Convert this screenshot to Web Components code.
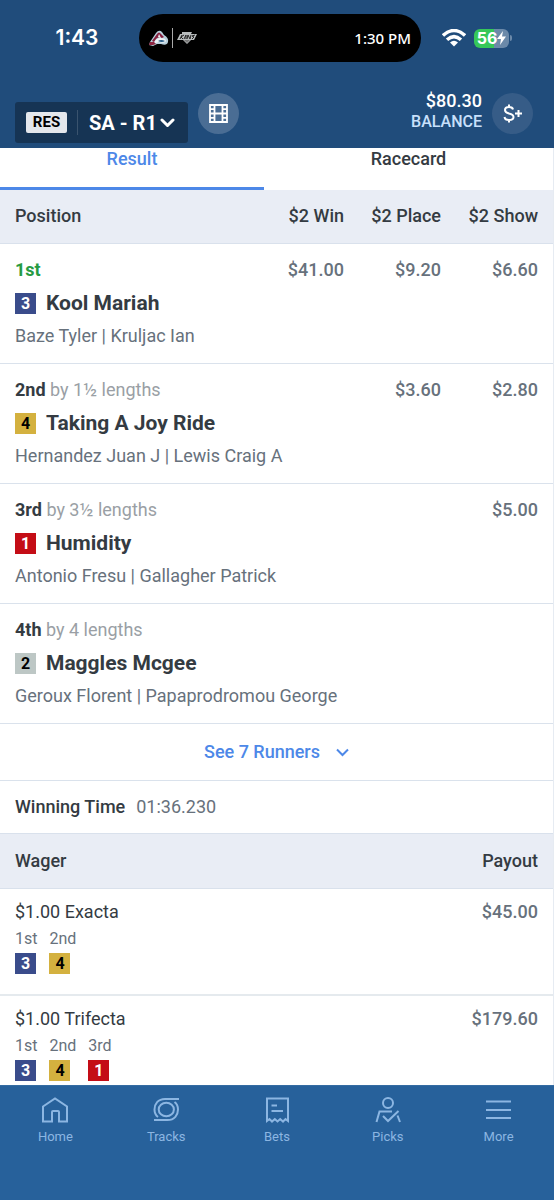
<!DOCTYPE html>
<html lang="en">
<head>
<meta charset="utf-8">
<meta name="viewport" content="width=device-width, initial-scale=1">
<title>SA - R1 Results</title>
<style>
  html, body { margin: 0; height: 100%; }
  body { font-family: Roboto, "Liberation Sans", sans-serif; font-size: 18px; line-height: 24px; color: #343b42; background: #fff; }
</style>
</head>
<body>
<race-app></race-app>
<script>
const define = (name, html) => customElements.define(name, class extends HTMLElement {
  connectedCallback() {
    if (this.shadowRoot) return;
    const root = this.attachShadow({ mode: "open" });
    root.innerHTML = typeof html === "function" ? html(this) : html;
  }
});

/* Numbered saddle cloth */
define("saddle-cloth", `
<style>
  :host { display: inline-grid; place-items: center; width: 21px; height: 21px; box-sizing: border-box;
    font-size: 16px; line-height: 21px; font-weight: 700; color: #000; background: #d4b13f; }
  :host([number="1"]) { background: #c40d16; color: #fff; }
  :host([number="2"]) { background: #bdc7c5; }
  :host([number="3"]) { background: #3a4c8b; color: #fff; }
</style><slot></slot>`);

define("status-bar", `
<style>
  :host { display: grid; grid-template-columns: 139fr 282px 133fr; align-items: center; padding-top: 14px; color: #fff;
    font-family: Inter, "Liberation Sans", sans-serif; }
  .clock { text-align: center; font-size: 21px; font-weight: 600; padding-left: 15px; }
  .island { display: flex; align-items: center; height: 48px; border-radius: 24px; background: #000;
    padding: 0 10px 0 9px; box-sizing: border-box; }
  .island svg { display: block; }
  .sep { width: 1px; height: 20px; background: #a9a9a9; margin: 0 4px 0 2px; }
  .game { margin-left: auto; font: 500 15px/24px "Noto Sans", sans-serif; }
  .right { display: flex; align-items: center; gap: 8px; padding-left: 21px; }
  .battery { display: flex; align-items: center; gap: 1px; }
  .cell { display: flex; align-items: center; justify-content: center; width: 35px; height: 19px; border-radius: 6px;
    background: linear-gradient(90deg, #36c759 56%, #6b89a9 56%); font-size: 16px; line-height: 19px; font-weight: 700; }
  .tip { width: 2px; height: 6px; border-radius: 0 2px 2px 0; background: #6b89a9; }
</style>
<span class="clock">1:43</span>
<div class="island">
  <svg width="22" height="20" viewBox="0 0 22 20" aria-label="Avalanche">
    <path d="M1 17 L2 14 L8 5 Q11 1 14 4 L16 7 Q21 10 20 14 Q19 18 13 16 L9 16 L5 18Z" fill="#b9d0dc"/>
    <path d="M4 13 L9 6 Q11 3 13 6 L16 9 L14 10 Q11 8 8 11 L6 14Z" fill="#86203f"/>
    <path d="M11 6 L13 10 L10 9Z" fill="#e9f0f4"/>
    <path d="M6 15 Q8 10 12 10 Q18 10 18 13 Q17 16 11 14 L8 15Z" fill="#eef3f6"/>
    <path d="M10 13 Q13 11 17 13 Q14 15 10 13Z" fill="#265d88"/><path d="M1 17 L2 14 L6 14 L8 16 L5 17Z" fill="#8e2541"/>
  </svg>
  <span class="sep"></span>
  <svg width="20" height="14" viewBox="0 0 20 14" aria-label="Kings">
    <path d="M5 1 H15 L14 3 H20 L17 9 H14 L10 13 L6 9 H0 L3 3 H5Z" fill="#b9bcbd"/>
    <path d="M3 8 L5 4 M4 6 L7 4 M4 6 L6 8 M7 8 L9 4 L9 8 M10 8 L11 4 L13 8 L14 4 M18 4 L15 5 L17 6 L15 8" stroke="#222" fill="none"/>
    <path d="M7 9 H13 L10 12Z" fill="#777"/>
  </svg>
  <span class="game">1:30 PM</span>
</div>
<div class="right">
  <svg width="24" height="18" viewBox="0 0 24 18" fill="none" stroke="#fff" stroke-width="3.4" aria-label="Wi-Fi">
    <path d="M1 6.500 Q12 -3.500 23 6.500"/><path d="M5 10.800 Q12 4.400 19 10.800"/><path d="M12 17.500 L8 13.500 Q12 10 16 13.500Z" fill="#fff" stroke="none"/>
  </svg>
  <div class="battery"><div class="cell"><span>56</span>
    <svg width="9" height="14" viewBox="0 0 9 14"><path d="M6 0 L0 8 H4 L3 14 L9 5.500 H5Z" fill="#fff"/></svg></div><span class="tip"></span></div>
</div>`);

define("race-header", `
<style>
  :host { display: flex; align-items: flex-start; padding: 31px 21px 5px 15px; color: #fff; }
  button { font: inherit; color: inherit; border: 0; padding: 0; cursor: pointer; }
  .race { display: flex; align-items: center; height: 41px; margin-top: 9px; padding: 0 13px 0 11px; border-radius: 3px; background: #163454; }
  .res { background: #e4e7ec; color: #000; border-radius: 2px; width: 41px; line-height: 21px; font-size: 15px; font-weight: 700; }
  .bar { width: 1px; height: 25px; margin: 0 11px 0 10px; background: #3a536e; }
  .name { font-size: 20px; font-weight: 700; margin-right: 3px; }
  .round { display: grid; place-items: center; width: 41px; height: 41px; border-radius: 50%; background: #4a6d94; }
  .film { margin: 0 auto 0 10px; }
  .balance { display: grid; gap: 2px; text-align: right; margin-right: 10px; font-weight: 500; line-height: 16px; }
  .balance small { font-size: 16px; line-height: 22px; color: #c8e0fb; }
  .add { background: #365c87; }
</style>
<button class="race"><span class="res">RES</span><span class="bar"></span><span class="name">SA - R1</span>
  <svg width="15" height="10" viewBox="0 0 15 10" fill="none" stroke="#fff" stroke-width="3" stroke-linecap="round" stroke-linejoin="round"><path d="M2 2 L7.500 7.500 L13 2"/></svg></button>
<button class="round film" aria-label="Replay">
  <svg width="19" height="19" viewBox="0 0 19 19" fill="none" stroke="#fff" stroke-width="1.8"><path d="M1 1 H18 V18 H1Z M5.500 1 V18 M13.500 1 V18 M5.500 9.500 H13.500"/><path d="M1 5.200 H5 M1 9.500 H5 M1 13.800 H5 M14 5.200 H18 M14 9.500 H18 M14 13.800 H18"/></svg></button>
<div class="balance">$80.30<small>BALANCE</small></div>
<button class="round add" aria-label="Deposit">
  <svg width="20" height="19" viewBox="0 0 20 19" fill="none" stroke="#fff" stroke-width="2"><path d="M10 5.500 Q9.500 3 6 3 Q2 3 2 6 Q2 8.500 6 9.500 Q10.500 10.500 10.500 13 Q10.500 16 6 16 Q2 16 1.500 13 M6 0.500 V3 M6 16 V18.500 M12 9.500 H19 M15.500 6 V13"/></svg></button>`);

define("view-tabs", `
<style>
  :host { display: grid; grid-template-columns: 264fr 289fr; }
  a { color: inherit; text-decoration: none; text-align: center; font-weight: 500; height: 39px; line-height: 22px; border-bottom: 3px solid transparent; }
  a[aria-current] { color: #4d88e8; border-color: #4d88e8; }
</style>
<a href="#result" aria-current="page">Result</a><a href="#racecard">Racecard</a>`);

const runners = [
  { place: "1st", n: 3, horse: "Kool Mariah", team: "Baze Tyler | Kruljac Ian", pay: ["$41.00", "$9.20", "$6.60"] },
  { place: "2nd", by: "by 1½ lengths", n: 4, horse: "Taking A Joy Ride", team: "Hernandez Juan J | Lewis Craig A", pay: ["", "$3.60", "$2.80"] },
  { place: "3rd", by: "by 3½ lengths", n: 1, horse: "Humidity", team: "Antonio Fresu | Gallagher Patrick", pay: ["", "", "$5.00"] },
  { place: "4th", by: "by 4 lengths", n: 2, horse: "Maggles Mcgee", team: "Geroux Florent | Papaprodromou George", pay: ["", "", ""] }
];
const tableStyle = `
  :host { display: block; }
  table { width: 100%; border-collapse: separate; border-spacing: 0; table-layout: fixed; }
  th, td { padding: 0; text-align: right; font-weight: 500; vertical-align: top; }
  th:first-child, td:first-child { text-align: left; padding-left: 15px; }
  th:last-child, td:last-child { padding-right: 15px; }
  thead th { background: #e9edf5; border-bottom: 1px solid #d9e1ec; padding-top: 14px; padding-bottom: 15px; }
  td { color: #67717c; }`;

define("results-table", () => `
<style>${tableStyle}
  .pay { width: 97px; } .last { width: 112px; }
  .top td { padding-top: 14px; }
  .detail td { padding-bottom: 15px; border-bottom: 1px solid #dae2ec; }
  b { font-weight: 700; color: #343b42; } .win b { color: #279b42; }
  .by { font-weight: 400; color: #9a9fa5; }
  .horse { display: flex; align-items: center; gap: 10px; margin: 9px 0; font-size: 21px; font-weight: 700; color: #343b42; }
  .team { font-weight: 400; }
</style>
<table>
  <colgroup><col><col class="pay"><col class="pay"><col class="last"></colgroup>
  <thead><tr><th scope="col">Position</th><th scope="col">$2 Win</th><th scope="col">$2 Place</th><th scope="col">$2 Show</th></tr></thead>
  ${runners.map((r, i) => `<tbody>
    <tr class="top ${i ? "" : "win"}"><td><b>${r.place}</b>${r.by ? ` <span class="by">${r.by}</span>` : ""}</td>${r.pay.map(p => `<td>${p}</td>`).join("")}</tr>
    <tr class="detail"><td colspan="4"><div class="horse"><saddle-cloth number="${r.n}">${r.n}</saddle-cloth>${r.horse}</div><div class="team">${r.team}</div></td></tr>
  </tbody>`).join("")}
</table>`);

define("race-summary", `
<style>
  :host { display: block; }
  button { display: flex; align-items: center; justify-content: center; gap: 16px; width: 100%; height: 57px; padding: 0; border: 0;
    border-bottom: 1px solid #dae2ec; background: none; font: inherit; font-weight: 500; color: #4d88e8; cursor: pointer; }
  p { display: flex; gap: 11px; margin: 0; padding: 14px 15px; color: #67717c; border-bottom: 1px solid #d9e1ec; }
  b { font-weight: 500; color: #343b42; }
</style>
<button>See 7 Runners<svg width="13" height="9" viewBox="0 0 13 9" fill="none" stroke="currentColor" stroke-width="2"><path d="M1 1.500 L6.500 7 L12 1.500"/></svg></button>
<p><b>Winning Time</b><span>01:36.230</span></p>`);

const wagers = [
  { name: "$1.00 Exacta", pay: "$45.00", legs: [["1st", 3], ["2nd", 4]] },
  { name: "$1.00 Trifecta", pay: "$179.60", legs: [["1st", 3], ["2nd", 4], ["3rd", 1]] }
];
define("wager-table", () => `
<style>${tableStyle}
  .pay { width: 160px; }
  thead th { padding-top: 15px; }
  tbody td { padding-top: 11px; padding-bottom: 20px; border-bottom: 2px solid #e5eaee; }
  .name { font-weight: 400; color: #343b42; }
  .legs { display: flex; gap: 12px; margin-top: 5px; font-size: 16px; line-height: 20px; font-weight: 400; }
  .legs span { display: grid; justify-items: start; gap: 4px; }
</style>
<table>
  <colgroup><col><col class="pay"></colgroup>
  <thead><tr><th scope="col">Wager</th><th scope="col">Payout</th></tr></thead>
  <tbody>${wagers.map(w => `<tr><td><div class="name">${w.name}</div><div class="legs">${w.legs.map(([p, n]) => `<span>${p}<saddle-cloth number="${n}">${n}</saddle-cloth></span>`).join("")}</div></td><td>${w.pay}</td></tr>`).join("")}</tbody>
</table>`);

const icons = {
  Home: `<path d="M2 10.500 L14 2.500 L26 10.500 V25.500 H18 V16 Q18 15 17 15 H12 Q11 15 11 16 V25.500 H2Z"/>`,
  Tracks: `<path d="M27 3 H13 C6 3 2.500 8 2.500 13.500 C2.500 17 4 19.500 6 21 M2 24 H15.500 C22.500 24 26 19 26 13.500 C26 10 24.500 7.500 22.500 6"/><ellipse cx="14.300" cy="13.500" rx="7.600" ry="6.800"/>`,
  Bets: `<path d="M4 25 V2.500 H25 V25 L22.500 23 L20 25.500 L17.200 23 L14.500 25.500 L11.800 23 L9 25.500 L6.500 23Z M8.500 9.500 H14 M8.500 15 H20"/>`,
  Picks: `<circle cx="14" cy="7" r="5"/><path d="M2.500 26 L5.500 15.500 H18 M9 20 L14 25 L24.500 15 M23.500 19.500 L26 26"/>`,
  More: `<path d="M1 5.500 H26 M1 14 H26 M1 22 H26"/>`
};
define("bottom-nav", () => `
<style>
  :host { display: block; background: #27619b; border-top: 1px solid #356ca2; box-sizing: border-box; }
  nav { display: grid; grid-template-columns: repeat(5, 1fr); padding: 10px 0 53px; }
  a { display: grid; justify-items: center; gap: 3px; color: #8cb6e2; text-decoration: none; font-size: 13px; line-height: 20px; }
  svg { display: block; }
</style>
<nav>${Object.entries(icons).map(([n, d]) => `<a href="#${n.toLowerCase()}"><svg width="28" height="28" viewBox="0 0 28 28" fill="none" stroke="currentColor" stroke-width="2">${d}</svg>${n}</a>`).join("")}</nav>`);

define("race-app", `
<style>
  :host { display: flex; flex-direction: column; height: 100vh; }
  header { background: #204c7b; flex: none; }
  main { flex: 1; min-height: 0; overflow: hidden; border-right: 1px solid #e6ebf2; }
  bottom-nav { flex: none; }
</style>
<header><status-bar></status-bar><race-header></race-header></header>
<main><view-tabs></view-tabs><results-table></results-table><race-summary></race-summary><wager-table></wager-table></main>
<bottom-nav></bottom-nav>`);
</script>
</body>
</html>
